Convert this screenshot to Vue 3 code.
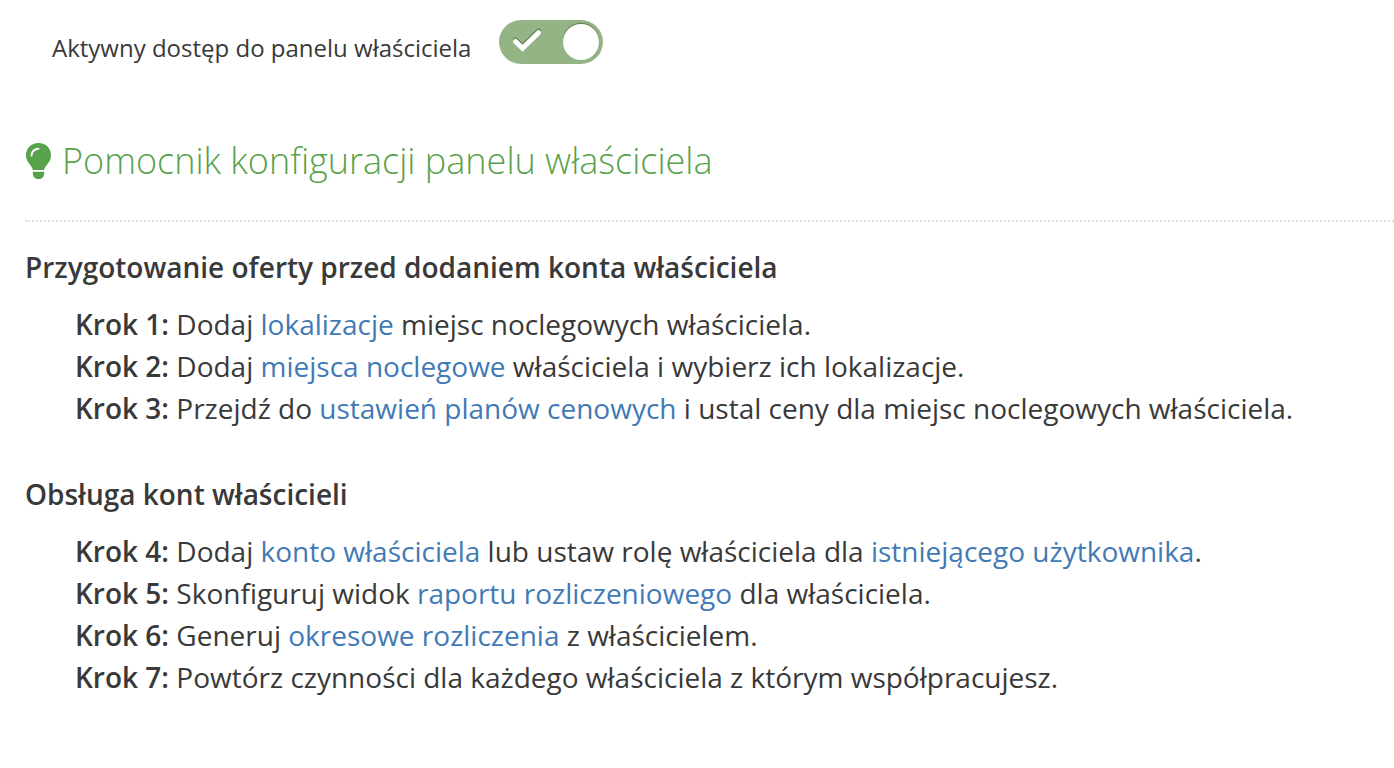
<script setup>
import { ref } from 'vue'

const active = ref(true)

const sections = [
  {
    title: 'Przygotowanie oferty przed dodaniem konta właściciela',
    steps: [
      { n: 1, parts: [{ t: 'Dodaj ' }, { t: 'lokalizacje', link: true }, { t: ' miejsc noclegowych właściciela.' }] },
      { n: 2, parts: [{ t: 'Dodaj ' }, { t: 'miejsca noclegowe', link: true }, { t: ' właściciela i wybierz ich lokalizacje.' }] },
      { n: 3, parts: [{ t: 'Przejdź do ' }, { t: 'ustawień planów cenowych', link: true }, { t: ' i ustal ceny dla miejsc noclegowych właściciela.' }] },
    ],
  },
  {
    title: 'Obsługa kont właścicieli',
    steps: [
      { n: 4, parts: [{ t: 'Dodaj ' }, { t: 'konto właściciela', link: true }, { t: ' lub ustaw rolę właściciela dla ' }, { t: 'istniejącego użytkownika', link: true }, { t: '.' }] },
      { n: 5, parts: [{ t: 'Skonfiguruj widok ' }, { t: 'raportu rozliczeniowego', link: true }, { t: ' dla właściciela.' }] },
      { n: 6, parts: [{ t: 'Generuj ' }, { t: 'okresowe rozliczenia', link: true }, { t: ' z właścicielem.' }] },
      { n: 7, parts: [{ t: 'Powtórz czynności dla każdego właściciela z którym współpracujesz.' }] },
    ],
  },
]
</script>

<template>
  <main class="page">
    <div class="access">
      <label for="owner-access">Aktywny dostęp do panelu właściciela</label>
      <span class="switch">
        <input id="owner-access" v-model="active" type="checkbox" />
        <svg v-if="active" class="check" viewBox="0 0 32 26" fill="none" stroke-width="5" stroke-linecap="round" aria-hidden="true">
          <path d="M4.500 12 L11.500 18.500 L27.500 3" stroke="#64835a" />
          <path d="M4.500 13.500 L11.500 20.300 L27.500 4.700" stroke="#fff" />
        </svg>
        <span class="knob" :class="{ off: !active }"></span>
      </span>
    </div>

    <h2 class="heading">
      <svg class="bulb" viewBox="0 0 26 36" aria-hidden="true">
        <path fill="currentColor" d="M13.500 0C6 0 1 5.600 1 12.200c0 3.500 1.400 6 3.200 8.500C5.700 22.800 7.500 24.600 7.800 27h11.400c.3-2.400 2.100-4.200 3.600-6.300 1.800-2.500 3.200-5 3.200-8.500C26 5.600 21 0 13.500 0zM7.800 28.800v1.700c0 3 2.300 5.500 4.700 5.500h2c2.400 0 4.700-2.500 4.700-5.500v-1.700z" />
        <path d="M6.500 12.500C6.500 8.700 9.500 5.800 13.500 5.800" fill="none" stroke="#fff" stroke-width="2" stroke-linecap="round" />
      </svg>
      <span>Pomocnik konfiguracji panelu właściciela</span>
    </h2>

    <section v-for="section in sections" :key="section.title" class="section">
      <h3>{{ section.title }}</h3>
      <ul>
        <li v-for="step in section.steps" :key="step.n">
          <strong>Krok {{ step.n }}:</strong>{{ ' ' }}<template v-for="(part, i) in step.parts" :key="i"><a v-if="part.link" href="#">{{ part.t }}</a><template v-else>{{ part.t }}</template></template>
        </li>
      </ul>
    </section>
  </main>
</template>

<style>
body {
  margin: 0;
  background: #fff;
}
</style>

<style scoped>
.page {
  padding: 20px 0 0 25px;
  font-family: "Open Sans", sans-serif;
  color: #393939;
}
.access {
  display: flex;
  align-items: flex-start;
  gap: 28px;
  padding-left: 27px;
  font-size: 24px;
  line-height: 56px;
}
.switch {
  position: relative;
  width: 104px;
  height: 44px;
}
.switch input {
  appearance: none;
  display: block;
  width: 100%;
  height: 100%;
  margin: 0;
  border-radius: 22px;
  background: #94b486;
  cursor: pointer;
}
.switch input:not(:checked) {
  background: #8b9aa3;
}
.check {
  position: absolute;
  left: 12px;
  top: 8px;
  width: 32px;
  height: 26px;
  pointer-events: none;
}
.knob {
  position: absolute;
  right: 4px;
  top: 4px;
  width: 36px;
  height: 36px;
  border-radius: 50%;
  background: #fff;
  box-shadow: 0 -1px 1px #5c7a52;
  pointer-events: none;
}
.knob.off {
  right: auto;
  left: 4px;
}
.heading {
  display: flex;
  align-items: center;
  gap: 11px;
  margin: 50px 0 0;
  padding-bottom: 24px;
  border-bottom: 2px dotted #ddd;
  font-size: 36px;
  font-weight: 300;
  line-height: 70px;
  color: #57a24a;
}
.bulb {
  width: 26px;
  height: 36px;
}
.section {
  padding-top: 25px;
}
.section + .section {
  padding-top: 45px;
}
h3 {
  margin: 0;
  font-size: 28px;
  font-weight: 600;
  line-height: 40px;
}
ul {
  margin: 16px 0 0;
  padding: 0 0 0 50px;
  list-style: none;
  font-size: 28px;
  line-height: 42px;
}
strong {
  font-weight: 600;
}
a {
  color: #427ab5;
  text-decoration: none;
}
</style>
